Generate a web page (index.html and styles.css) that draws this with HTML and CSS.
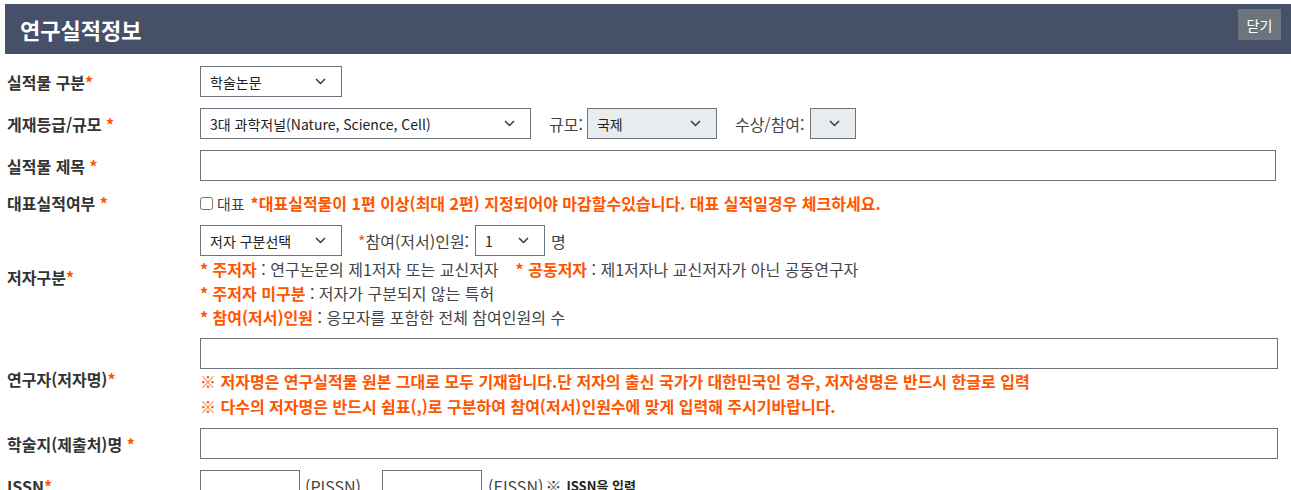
FILE: index.html
```html
<!DOCTYPE html>
<html lang="ko">
<head>
<meta charset="utf-8">
<title>연구실적정보</title>
<link rel="stylesheet" href="styles.css">
</head>
<body>
<div class="pop">
  <div class="pop-head">
    <h1 class="pop-title">연구실적정보</h1>
    <button class="btn-close" type="button">닫기</button>
  </div>

  <div class="form">
    <div class="row">
      <div class="lbl">실적물 구분<em>*</em></div>
      <div class="fld">
        <div class="sel w142"><span>학술논문</span><svg class="chev" width="11" height="7" viewBox="0 0 11 7"><path d="M1 1l4.5 4.5L10 1" fill="none" stroke="#343a40" stroke-width="1.5"/></svg></div>
      </div>
    </div>

    <div class="row">
      <div class="lbl">게재등급/규모 <em>*</em></div>
      <div class="fld">
        <div class="sel w331"><span>3대 과학저널(Nature, Science, Cell)</span><svg class="chev" width="11" height="7" viewBox="0 0 11 7"><path d="M1 1l4.5 4.5L10 1" fill="none" stroke="#343a40" stroke-width="1.5"/></svg></div>
        <span class="txt ml18">규모:</span>
        <div class="sel dis w130 ml4"><span>국제</span><svg class="chev" width="11" height="7" viewBox="0 0 11 7"><path d="M1 1l4.5 4.5L10 1" fill="none" stroke="#343a40" stroke-width="1.5"/></svg></div>
        <span class="txt ml18">수상/참여:</span>
        <div class="sel dis w46 ml5 end"><svg class="chev" width="11" height="7" viewBox="0 0 11 7"><path d="M1 1l4.5 4.5L10 1" fill="none" stroke="#343a40" stroke-width="1.5"/></svg></div>
      </div>
    </div>

    <div class="row">
      <div class="lbl">실적물 제목 <em>*</em></div>
      <div class="fld">
        <input class="inp w1076" type="text">
      </div>
    </div>

    <div class="row row-chk">
      <div class="lbl">대표실적여부 <em>*</em></div>
      <div class="fld">
        <label class="chk"><input type="checkbox"> 대표</label>
        <span class="warn ml6">*대표실적물이 1편 이상(최대 2편) 지정되어야 마감할수있습니다. 대표 실적일경우 체크하세요.</span>
      </div>
    </div>

    <div class="row row-author">
      <div class="lbl">저자구분<em>*</em></div>
      <div class="fld col">
        <div class="line-sel">
          <div class="sel w142"><span>저자 구분선택</span><svg class="chev" width="11" height="7" viewBox="0 0 11 7"><path d="M1 1l4.5 4.5L10 1" fill="none" stroke="#343a40" stroke-width="1.5"/></svg></div>
          <span class="txt ml16"><em>*</em>참여(저서)인원:</span>
          <div class="sel w70 ml6"><span>1</span><svg class="chev" width="11" height="7" viewBox="0 0 11 7"><path d="M1 1l4.5 4.5L10 1" fill="none" stroke="#343a40" stroke-width="1.5"/></svg></div>
          <span class="txt ml6">명</span>
        </div>
        <ul class="help">
          <li><b>* 주저자</b> : 연구논문의 제1저자 또는 교신저자<span class="sp"></span><b>* 공동저자</b> : 제1저자나 교신저자가 아닌 공동연구자</li>
          <li><b>* 주저자 미구분</b> : 저자가 구분되지 않는 특허</li>
          <li><b>* 참여(저서)인원</b> : 응모자를 포함한 전체 참여인원의 수</li>
        </ul>
      </div>
    </div>

    <div class="row row-names">
      <div class="lbl">연구자(저자명)<em>*</em></div>
      <div class="fld col">
        <input class="inp w1078" type="text">
        <ul class="notes">
          <li>※ 저자명은 연구실적물 원본 그대로 모두 기재합니다.단 저자의 출신 국가가 대한민국인 경우, 저자성명은 반드시 한글로 입력</li>
          <li>※ 다수의 저자명은 반드시 쉼표(,)로 구분하여 참여(저서)인원수에 맞게 입력해 주시기바랍니다.</li>
        </ul>
      </div>
    </div>

    <div class="row">
      <div class="lbl">학술지(제출처)명 <em>*</em></div>
      <div class="fld">
        <input class="inp w1078" type="text">
      </div>
    </div>

    <div class="row">
      <div class="lbl">ISSN<em>*</em></div>
      <div class="fld">
        <input class="inp w100" type="text">
        <span class="txt ml5">(PISSN)</span>
        <input class="inp w100 ml21" type="text">
        <span class="txt ml6">(EISSN)</span>
        <span class="txt ml2">※</span>
        <span class="tip ml5">ISSN을 입력</span>
      </div>
    </div>
  </div>
</div>
</body>
</html>
```

FILE: styles.css
```css
html, body {
  margin: 0;
  padding: 0;
  background: #fff;
}
body {
  padding: 4px 0 0 5px;
  overflow: hidden;
  font-family: "Noto Sans CJK KR", "Noto Sans", sans-serif;
  font-size: 16px;
  color: #333;
}
.pop-head {
  height: 50px;
  background: #465069;
  display: flex;
  justify-content: space-between;
  align-items: flex-start;
  padding: 0 10px 0 15px;
}
.pop-title {
  margin: 0;
  padding-top: 10px;
  font-size: 22px;
  line-height: 30px;
  font-weight: 700;
  color: #fff;
}
.btn-close {
  margin-top: 5px;
  width: 43px;
  height: 31px;
  border: 0;
  padding: 0;
  background: #6c757d;
  color: #fff;
  font-family: inherit;
  font-size: 14px;
}
.form {
  padding-top: 12px;
}
.row {
  display: flex;
  align-items: center;
  margin-bottom: 11px;
}
.row-author, .row-names {
  margin-bottom: 9px;
}
.lbl {
  width: 193px;
  padding-left: 2px;
  flex: none;
  font-weight: 700;
  font-size: 16px;
  line-height: 22px;
  color: #333;
}
em {
  font-style: normal;
  color: #ff5500;
}
.fld {
  display: flex;
  align-items: center;
}
.fld.col {
  flex-direction: column;
  align-items: flex-start;
}
.line-sel {
  display: flex;
  align-items: center;
}
.sel {
  box-sizing: border-box;
  height: 31px;
  border: 1px solid #6b737d;
  background: #fff;
  display: flex;
  align-items: center;
  justify-content: space-between;
  padding: 0 15px 0 9px;
  font-size: 14px;
  color: #222;
}
.sel.dis {
  background: #e9ecef;
}
.sel.end {
  justify-content: flex-end;
}
.chev {
  flex: none;
  display: block;
}
.inp {
  box-sizing: border-box;
  height: 31px;
  border: 1px solid #6b737d;
  margin: 0;
  padding: 0 8px;
  font-family: inherit;
  font-size: 14px;
  background: #fff;
}
.w46 { width: 46px; }
.w70 { width: 70px; }
.w100 { width: 100px; }
.w130 { width: 130px; }
.w142 { width: 142px; }
.w331 { width: 331px; }
.w1076 { width: 1076px; }
.w1078 { width: 1078px; }
.ml2 { margin-left: 2px; }
.ml4 { margin-left: 4px; }
.ml5 { margin-left: 5px; }
.ml6 { margin-left: 6px; }
.ml16 { margin-left: 16px; }
.ml18 { margin-left: 18px; }
.ml21 { margin-left: 21px; }
.txt {
  color: #444;
  font-size: 16px;
}
.row-chk .fld {
  height: 22px;
}
.chk {
  display: flex;
  align-items: center;
  color: #444;
  font-size: 15px;
}
.chk input {
  margin: 0 4px 0 0;
  width: 13px;
  height: 13px;
}
.warn {
  color: #ff5500;
  font-weight: 700;
  font-size: 16px;
}
.help, .notes {
  list-style: none;
  margin: 0;
  padding: 0;
}
.help {
  margin-top: 1px;
}
.help li {
  line-height: 24px;
  color: #444;
}
.help b {
  color: #ff5500;
  font-weight: 700;
}
.help .sp {
  display: inline-block;
  width: 17px;
}
.notes li {
  line-height: 25px;
  color: #ff5500;
  font-weight: 700;
}
.tip {
  font-size: 13px;
  font-weight: 700;
  color: #222;
}
```
